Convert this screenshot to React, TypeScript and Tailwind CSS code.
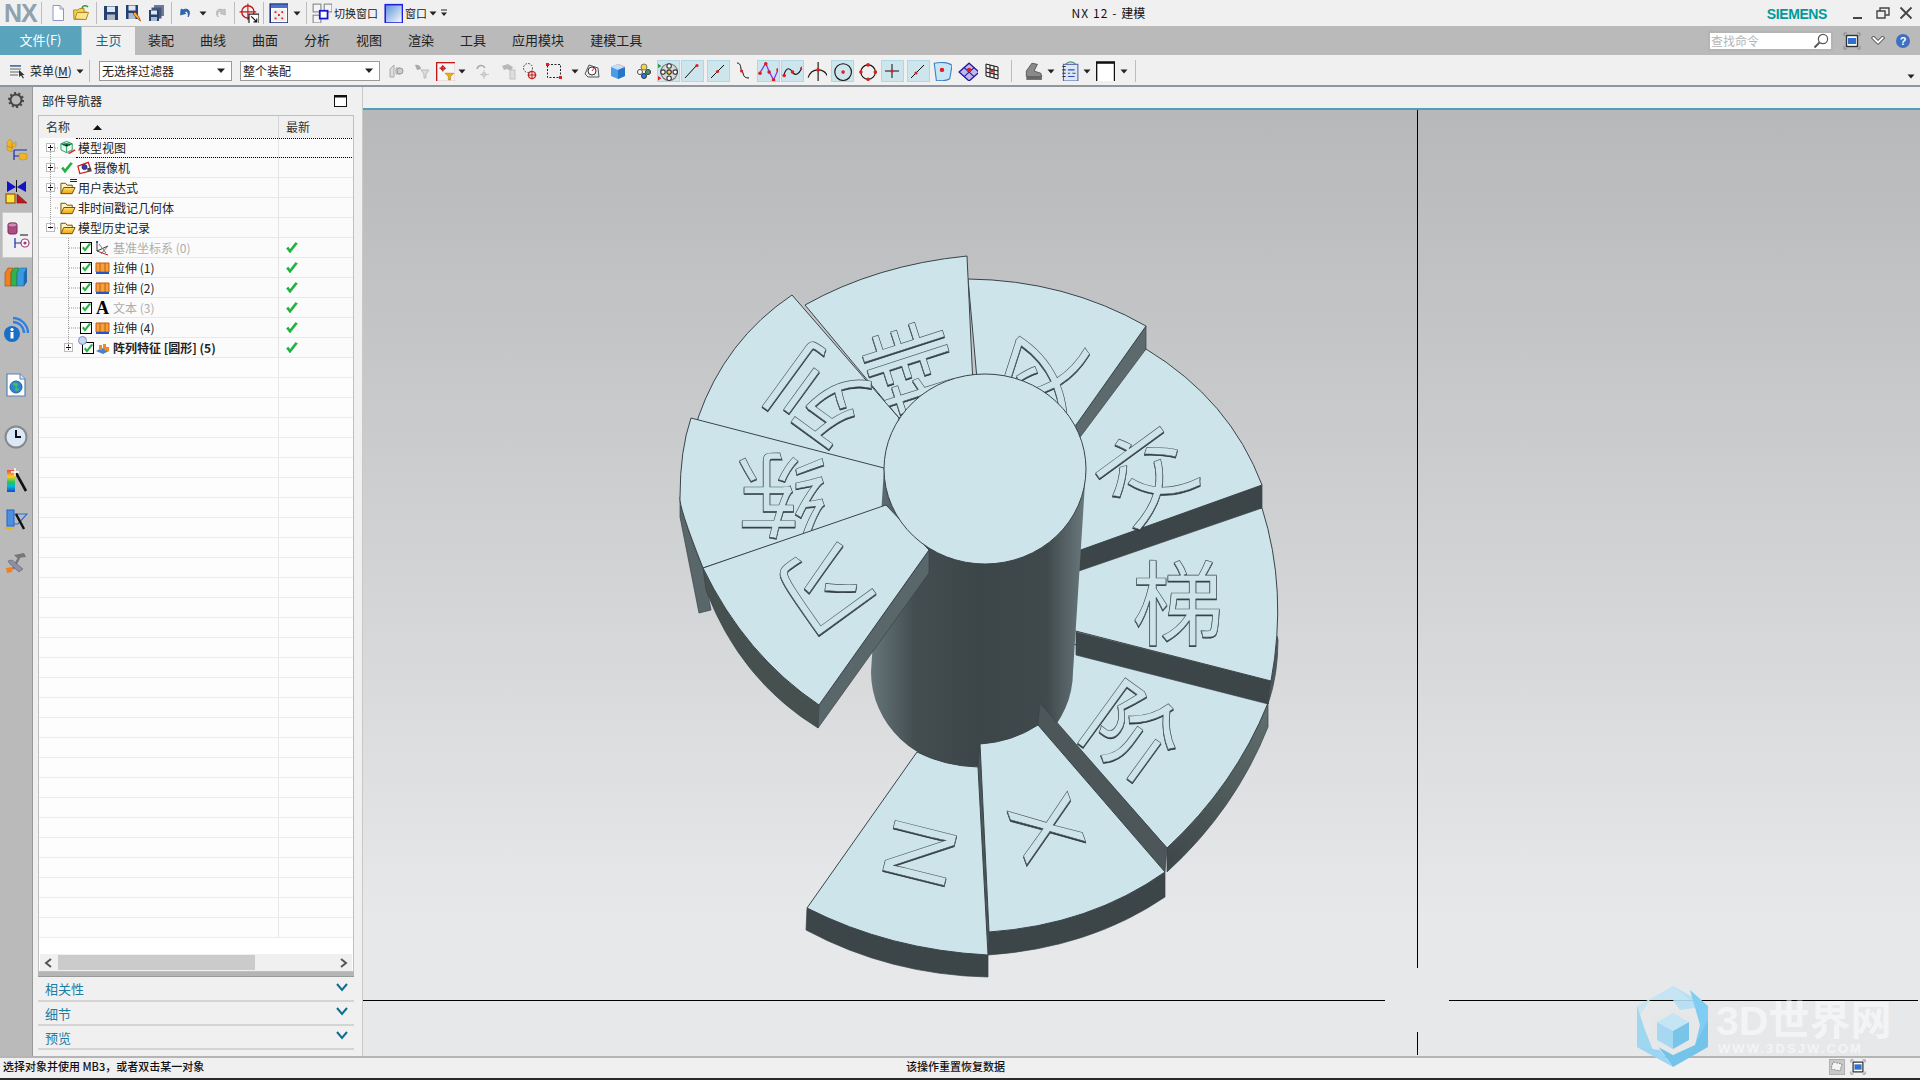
import React from "react";

const cjk = "font-['Noto_Sans_CJK_SC','Liberation_Sans',sans-serif]";
const R = "#e11d1d";

function S({ children, w = 18, h = 18 }: { children: React.ReactNode; w?: number; h?: number }) {
  return (
    <svg width={w} height={h} viewBox="0 0 18 18" className="shrink-0" fill="none">
      {children}
    </svg>
  );
}
const Dot = ({ x, y, r = 1.6 }: { x: number; y: number; r?: number }) => <circle cx={x} cy={y} r={r} fill={R} />;
const Dd = () => (
  <svg width="8" height="5" viewBox="0 0 8 5" className="shrink-0">
    <path d="M0.5 0.5H7.5L4 4.5Z" fill="#222" />
  </svg>
);

const icons: Record<string, React.ReactNode> = {
  doc: <S><path d="M4 1.5H11L14.5 5V16.5H4Z" fill="#fff" stroke="#8a96c8" /><path d="M11 1.5V5H14.5" stroke="#8a96c8" /></S>,
  folder: <S><path d="M1.5 6H6L7.5 4.5H12V8H15L14 15.5H2Z" fill="#f5cf55" stroke="#b58a1e" /><path d="M3 15L5 8.5H16.5L14 15.5Z" fill="#fbe58c" stroke="#b58a1e" /><path d="M10 4C11 1.5 14 1 16 3" stroke="#2f9e44" strokeWidth="1.6" /></S>,
  save: <S><rect x="2" y="2" width="14" height="14" fill="#23406f" /><rect x="5" y="2.5" width="8" height="5.5" fill="#dfe7f3" /><rect x="5" y="10.5" width="8" height="5.5" fill="#aeb8c8" /></S>,
  saveas: <S><rect x="2" y="1" width="12" height="14" fill="#23406f" /><rect x="4.5" y="1.5" width="7" height="5" fill="#dfe7f3" /><rect x="4.5" y="9" width="7" height="6" fill="#aeb8c8" /><path d="M9 10L14 15L16.5 17L15 13L11 8Z" fill="#f2b632" stroke="#c03020" strokeWidth=".8" /></S>,
  saveall: <S><rect x="7" y="1" width="10" height="11" fill="#6d7d99" /><rect x="4.5" y="3.5" width="10" height="11" fill="#44587c" /><rect x="2" y="6" width="10" height="11" fill="#23406f" /><rect x="4" y="6.5" width="6" height="4" fill="#dfe7f3" /><rect x="4" y="13" width="6" height="4" fill="#aeb8c8" /></S>,
  undo: <S><path d="M4 5L3.5 11L9 9.5L7 8C9.5 6.5 12 8 11 13C14.5 9 12 3 6 5.8Z" fill="#2c67b5" stroke="#1d4f91" strokeWidth=".6" /></S>,
  redo: <S><path d="M14 5L14.5 11L9 9.5L11 8C8.5 6.5 6 8 7 13C3.5 9 6 3 12 5.8Z" fill="#c5c5c5" stroke="#aaa" strokeWidth=".6" /></S>,
  target: <S w={20} h={20}><circle cx="8" cy="8" r="5.5" stroke="#c01818" strokeWidth="1.2" /><path d="M8 0.5V15.5M0.5 8H15.5" stroke="#c01818" /><rect x="9" y="10" width="9" height="9" fill="#fff" stroke="#111" /><path d="M11 12L16 17M16 14V17H13" stroke="#111" /></S>,
  wingrid: <S w={20} h={20}><rect x="2" y="1" width="16" height="17" fill="#fff" stroke="#1b2a80" strokeWidth="1.4" /><rect x="2.5" y="1.5" width="15" height="3" fill="#4b74c8" /><rect x="4" y="6" width="12" height="10" fill="#ececec" /><path d="M6 7.5h1.6v1.6H6zM12 7.5h1.6v1.6H12zM9 10h1.6v1.6H9zM6 13h1.6v1.6H6zM12 13h1.6v1.6H12z" fill={R} /></S>,
  switchwin: <S w={20} h={20}><rect x="1" y="1" width="7" height="7" stroke="#888" fill="#f4f4f4" /><rect x="11" y="1" width="7" height="7" stroke="#888" fill="#f4f4f4" /><rect x="1" y="11" width="7" height="7" stroke="#888" fill="#f4f4f4" /><rect x="7" y="7" width="7" height="7" stroke="#1515d0" strokeWidth="1.6" fill="#fff" /></S>,
  window: <S w={20} h={20}><defs><linearGradient id="wg" x1="0" y1="0" x2="1" y2="1"><stop offset="0" stopColor="#5a8ed8" /><stop offset="1" stopColor="#fff" /></linearGradient></defs><rect x="2" y="1.5" width="15.5" height="16.5" fill="url(#wg)" stroke="#1e1ee0" strokeWidth="1.4" /></S>,
  menu: <S><rect x="1" y="3" width="11" height="1.8" fill="#4a7ba8" /><path d="M1 7H12M1 10H12M1 13H9" stroke="#666" /><path d="M10 8V15L12 13.5L14 16.5L15 16L13.2 13H15.5Z" fill="#333" /></S>,
  gray1: <S><path d="M3 7L7 3V15H3ZM9 6H13V12H9Z" fill="#ddd" stroke="#aaa" /><circle cx="13" cy="9" r="3" fill="#ccc" stroke="#999" /></S>,
  gray2: <S><path d="M2 3C5 2 8 4 8 7L4 8Z" fill="#aaa" /><path d="M8 8H16L13 12V16H11V12Z" fill="#ddd" stroke="#bbb" /></S>,
  redfilter: <S w={20} h={20}><rect x="1.5" y="1.5" width="17" height="17" fill="#f5f5f5" stroke="#c01818" strokeWidth="1.2" /><path d="M7 3.5V9.5M4 6.5H10" stroke="#c01818" /><circle cx="7" cy="6.5" r="1.6" stroke="#c01818" /><path d="M9 11H17L14 14V17H12V14Z" fill="#eab308" stroke="#a17808" strokeWidth=".5" /></S>,
  gray3: <S><path d="M4 7C5 3 10 2 12 6" stroke="#aaa" strokeWidth="1.5" /><path d="M11 8V17M7 12.5H16" stroke="#c8c8c8" /><circle cx="11" cy="12.5" r="2" stroke="#c0c0c0" /></S>,
  gray4: <S><path d="M2 4L8 2L13 5L11 9L7 7L4 8Z" fill="#b8b8b8" /><rect x="10" y="8" width="5" height="9" fill="#ddd" stroke="#c0c0c0" /></S>,
  dashc: <S><circle cx="7" cy="6" r="4.5" stroke="#333" strokeDasharray="1.5 1.5" /><circle cx="11" cy="13" r="3.5" stroke="#c01818" strokeWidth="1.2" /><path d="M11 8.5V17.5M6.5 13H15.5" stroke="#c01818" /></S>,
  dashr: <S><rect x="2.5" y="2.5" width="13" height="13" stroke="#222" strokeDasharray="2 1.5" /><rect x="1" y="1" width="3" height="3" fill={R} /><rect x="14" y="14" width="3" height="3" fill={R} /></S>,
  gauge: <S><path d="M2 12L6 3L15 6L16 15H5Z" fill="#e8eef5" stroke="#555" /><circle cx="9" cy="9" r="4" fill="#fff" stroke="#333" /><path d="M9 9L12 5" stroke={R} /></S>,
  cube: <S><path d="M9 2L16 5V14L9 17L2 14V5Z" fill="#4b9be6" /><path d="M2 5L9 8L16 5L9 2Z" fill="#bfe0f8" /><path d="M9 8V17L16 14V5Z" fill="#2a74c8" /><path d="M9 2L16 5" stroke="#f5b5b5" /></S>,
  snappts: <S><circle cx="9" cy="5" r="3" fill="#f6d33c" stroke="#777" /><circle cx="5" cy="10" r="2.5" fill="#fff" stroke="#444" /><circle cx="13" cy="10" r="2.5" fill="#38a169" stroke="#333" /><circle cx="9" cy="14" r="2.5" fill="#2c7be5" stroke="#333" /></S>,
  pointsel: <S w={20} h={20}><circle cx="10" cy="10" r="7.5" fill="#d8d8d8" stroke="#777" /><circle cx="10" cy="10" r="2" fill="#f6d33c" stroke="#333" /><circle cx="10" cy="4.5" r="2" fill="#fff" stroke="#333" /><circle cx="10" cy="15.5" r="2" fill="#fff" stroke="#333" /><circle cx="4.5" cy="10" r="2" fill="#fff" stroke="#333" /><circle cx="15.5" cy="10" r="2" fill="#fff" stroke="#333" /><path d="M0 2.5L3 4.5L0 6.5Z" fill="#1ca34a" /><path d="M0 13.5L3 15.5L0 17.5Z" fill={R} /></S>,
  lend: <S><path d="M2 16L14 3" stroke="#111" /><Dot x={14} y={3.5} /></S>,
  lmid: <S><path d="M2 16L15 3" stroke="#111" /><Dot x={8.5} y={9.5} /></S>,
  scurve: <S><path d="M4 1C9 1 7 8 9 9C11 11 9 16 16 16" stroke="#111" /><Dot x={8.6} y={9} /></S>,
  pole: <S w={20} h={20}><path d="M1.5 11L7 2L10 10L14 17L18 8" stroke="#7c3aed" /><path d="M1.5 11L7 2L14 17L18 8" stroke="#7c3aed" opacity=".5" /><Dot x={1.8} y={11} /><Dot x={7} y={2.5} /><Dot x={10} y={10} /><Dot x={14} y={17} /><Dot x={18} y={8} /></S>,
  wave: <S w={20} h={20}><path d="M1.5 13C4 5 7 6 9.5 10C12 14 15 12 18 6" stroke="#111" /><Dot x={2} y={13} /><Dot x={9.5} y={10} /><Dot x={18} y={6.5} /></S>,
  tan: <S w={20} h={20}><path d="M1 15C3 9 7 8 10 8C13 8 17 9 19 15M10 1V18" stroke="#111" /><Dot x={10} y={8} /></S>,
  ccenter: <S w={20} h={20}><circle cx="10" cy="10" r="7.5" stroke="#111" /><Dot x={10} y={10} /></S>,
  cquad: <S w={20} h={20}><circle cx="10" cy="10" r="6.5" stroke="#111" /><Dot x={10} y={3.5} /><Dot x={10} y={16.5} /><Dot x={3.5} y={10} /><Dot x={16.5} y={10} /></S>,
  cross: <S><path d="M9 2V16M2 9H16" stroke="#111" /><Dot x={9} y={9} /></S>,
  lon: <S><path d="M2 16L15 3" stroke="#111" /><Dot x={7} y={11} /></S>,
  face: <S w={20} h={20}><path d="M2 2C7 1 15 1 18 4L16 16C12 19 7 17 4 18Z" fill="#c6e5f5" stroke="#3b82c4" /><Dot x={9} y={8} r={2} /></S>,
  diamond: <S w={20} h={20}><path d="M10 2L19 10L10 18L1 10Z" fill="#bcb9ee" stroke="#2418a0" strokeWidth="1.2" /><path d="M5.5 6L14.5 14M14.5 6L5.5 14" stroke="#2418a0" /><Dot x={10} y={8} r={2} /></S>,
  mesh: <S><path d="M3 2L15 5V17L3 14ZM7 3V15M11 4V16M3 6L15 9M3 10L15 13" stroke="#111" /><Dot x={9} y={9} /></S>,
  printer: <S w={20} h={20}><path d="M3 14V9L8 2L13 3L10 9L16 11L17 14Z" fill="#8a8a8a" stroke="#444" strokeWidth=".7" /><path d="M3 14H17V17H3Z" fill="#666" /></S>,
  notebook: <S w={20} h={20}><rect x="4" y="3" width="13" height="15" fill="#dfe6f7" stroke="#5566aa" /><path d="M3 5H6M3 8H6M3 11H6M3 14H6" stroke="#333" /><path d="M8 8H14M8 11H10M12 11H15M8 14H14" stroke="#2b50b5" /><path d="M6 3C8 0 13 0 15 3" stroke="#4a9a6a" /></S>,
  whitebox: <S w={20} h={20}><rect x="1.5" y="1" width="16" height="18" fill="#fff" stroke="#111" strokeWidth="1.2" /><rect x="1" y="0.5" width="17" height="2" fill="#111" /></S>,
};

const Q = ({ n, cn }: { n: string; cn: string }) => <div className={`flex items-center justify-center shrink-0 ${cn}`}>{icons[n]}</div>;

const tools: { n?: string; w: string; hl?: boolean; dd?: boolean; ml?: string }[] = [
  { n: "gray1", w: "w-[27px]" },
  { n: "gray2", w: "w-[24px]" },
  { n: "redfilter", w: "w-[22px]" },
  { dd: true, w: "w-[12px]" },
  { n: "gray3", w: "w-[28px]" },
  { n: "gray4", w: "w-[26px]" },
  { n: "dashc", w: "w-[16px]" },
  { n: "dashr", w: "w-[32px]" },
  { dd: true, w: "w-[10px]" },
  { n: "gauge", w: "w-[25px]" },
  { n: "cube", w: "w-[26px]" },
  { n: "snappts", w: "w-[26px]" },
  { n: "pointsel", w: "w-[23px]", hl: true },
  { n: "lend", w: "w-[23px]", hl: true, ml: "ml-px" },
  { n: "lmid", w: "w-[23px]", hl: true, ml: "ml-[3px]" },
  { n: "scurve", w: "w-[25px]" },
  { n: "pole", w: "w-[23px]", hl: true, ml: "ml-[2px]" },
  { n: "wave", w: "w-[23px]", hl: true, ml: "ml-px" },
  { n: "tan", w: "w-[27px]" },
  { n: "ccenter", w: "w-[23px]", hl: true },
  { n: "cquad", w: "w-[27px]" },
  { n: "cross", w: "w-[23px]", hl: true },
  { n: "lon", w: "w-[23px]", hl: true, ml: "ml-[3px]" },
  { n: "face", w: "w-[25px]" },
  { n: "diamond", w: "w-[26px]" },
  { n: "mesh", w: "w-[23px]" },
];

const Sep = ({ cn = "" }: { cn?: string }) => <div className={`w-px h-[22px] bg-[#bdbdbd] shrink-0 ${cn}`} />;

function TitleBar() {
  return (
    <div className={`h-[26px] bg-[#f0f0f0] flex items-center relative shrink-0 ${cjk} text-[12px] text-[#222]`}>
      <span className="ml-[4px] w-[33px] font-['Liberation_Sans',sans-serif] font-bold text-[25px] leading-none text-[#8ea1ad] tracking-[-1px]">NX</span>
      <Sep cn="ml-[4px]" />
      <Q n="doc" cn="w-[20px] ml-[6px]" />
      <Q n="folder" cn="w-[20px] ml-[3px]" />
      <Sep cn="ml-[5px]" />
      <Q n="save" cn="w-[20px] ml-[4px]" />
      <Q n="saveas" cn="w-[20px] ml-[2px]" />
      <Q n="saveall" cn="w-[20px] ml-[3px]" />
      <Sep cn="ml-[5px]" />
      <Q n="undo" cn="w-[20px] ml-[4px]" />
      <div className="ml-[3px]"><Dd /></div>
      <Q n="redo" cn="w-[20px] ml-[3px]" />
      <Sep cn="ml-[4px]" />
      <Q n="target" cn="w-[22px] ml-[3px]" />
      <Sep cn="ml-[3px]" />
      <Q n="wingrid" cn="w-[22px] ml-[3px]" />
      <div className="ml-[4px]"><Dd /></div>
      <Sep cn="ml-[5px]" />
      <Q n="switchwin" cn="w-[20px] ml-[5px]" />
      <span className="ml-[2px] leading-none text-[11px]">切换窗口</span>
      <Q n="window" cn="w-[22px] ml-[4px]" />
      <span className="ml-[1px] leading-none text-[11px]">窗口</span>
      <div className="ml-[2px]"><Dd /></div>
      <svg width="8" height="8" viewBox="0 0 8 8" className="ml-[3px]"><path d="M1 1H7" stroke="#222" /><path d="M1 3.5H7L4 7Z" fill="#222" /></svg>
      <div className="flex-1 flex justify-center">
        <span className="ml-[2px] text-[12px] leading-none text-[#111]"><span className="tracking-[1.1px]">NX 12 - </span>建模</span>
      </div>
      <span className="font-['Liberation_Sans',sans-serif] font-bold text-[14px] tracking-[-0.4px] text-[#009a9a] leading-none mt-[2px]">SIEMENS</span>
      <svg width="14" height="14" viewBox="0 0 14 14" className="ml-[25px]"><path d="M1 12H10" stroke="#444" strokeWidth="2" /></svg>
      <svg width="14" height="14" viewBox="0 0 14 14" className="ml-[10px]"><path d="M1 5H9V12H1ZM4 5V2H13V9H9" stroke="#444" strokeWidth="1.4" fill="none" /></svg>
      <svg width="14" height="14" viewBox="0 0 14 14" className="ml-[9px] mr-[7px]"><path d="M1.5 1.5L12.5 12.5M12.5 1.5L1.5 12.5" stroke="#444" strokeWidth="1.8" /></svg>
    </div>
  );
}

function Tabs() {
  const t = ["装配", "曲线", "曲面", "分析", "视图", "渲染", "工具", "应用模块", "建模工具"];
  return (
    <div className={`h-[29px] bg-[#bababa] flex items-stretch shrink-0 ${cjk} text-[13px] text-[#222]`}>
      <div className="w-[81px] bg-[#5aa3bd] text-white flex items-center justify-center pb-[2px]">文件(F)</div>
      <div className="w-[53px] ml-px mt-px bg-[#f0f0f0] text-[#0a6f93] flex items-center justify-center pb-[2px]">主页</div>
      {t.map((x) => (
        <div key={x} className="px-[13px] flex items-center leading-none pb-[2px]">{x}</div>
      ))}
      <div className="flex-1" />
      <div className="flex items-center">
        <div className="w-[125px] h-[20px] bg-white border-2 border-[#b4b4b4] flex items-center justify-between pl-[1px] pr-[2px] text-[12px] text-[#b5b5b5]">
          <span className="leading-none">查找命令</span>
          <svg width="16" height="16" viewBox="0 0 16 16"><circle cx="10" cy="6" r="4.6" fill="#fff" stroke="#555" strokeWidth="1.2" /><path d="M6.5 9.5L1.5 14.5" stroke="#555" strokeWidth="2" /></svg>
        </div>
        <svg width="18" height="18" viewBox="0 0 18 18" className="ml-[10px]"><path d="M1 4V1H4M14 1H17V4M17 14V17H14M4 17H1V14" stroke="#888" fill="none" /><rect x="3.5" y="3.5" width="11" height="11" fill="#fff" stroke="#333" strokeWidth="1.4" /><rect x="5" y="6" width="8" height="6" fill="#2f6fd0" /></svg>
        <svg width="16" height="14" viewBox="0 0 16 14" className="ml-[9px]"><path d="M1.5 4L8 10.5L14.5 4L12.5 2L8 6.5L3.5 2Z" fill="#fff" stroke="#333" /></svg>
        <svg width="16" height="16" viewBox="0 0 16 16" className="ml-[9px] mr-[9px]"><circle cx="8" cy="8" r="7" fill="#3f6fc4" /><text x="8" y="12" fontSize="11" fontWeight="700" fill="#fff" textAnchor="middle" fontFamily="Liberation Sans">?</text></svg>
      </div>
    </div>
  );
}

function Combo({ text, w, ml }: { text: string; w: string; ml: string }) {
  return (
    <div className={`${w} ${ml} h-[20px] bg-white border border-[#9a9a9a] flex items-center justify-between pl-[2px] pr-[5px] shrink-0 text-[12px] text-[#222]`}>
      <span className="leading-none">{text}</span>
      <svg width="9" height="6" viewBox="0 0 9 6"><path d="M0 0.5H8L4 5Z" fill="#222" /></svg>
    </div>
  );
}

function Toolbar() {
  return (
    <div className={`h-[32px] pt-[2px] bg-[#f0f0f0] border-b-2 border-[#8f979c] flex items-center shrink-0 ${cjk} text-[12px] text-[#222]`}>
      <Q n="menu" cn="w-[18px] ml-[9px]" />
      <span className="ml-[3px] leading-none">菜单(<u>M</u>)</span>
      <div className="ml-[4px]"><Dd /></div>
      <Sep cn="ml-[5px]" />
      <Combo text="无选择过滤器" w="w-[133px]" ml="ml-[9px]" />
      <Combo text="整个装配" w="w-[140px]" ml="ml-[8px]" />
      <div className="w-[3px]" />
      {tools.map((t, i) =>
        t.dd ? (
          <div key={i} className={`${t.w} shrink-0 flex items-center justify-center`}><Dd /></div>
        ) : (
          <div key={i} className={`${t.w} ${t.ml ?? ""} h-[22px] shrink-0 flex items-center justify-center ${t.hl ? "bg-[#cde5ec] border border-[#aed8e5]" : ""}`}>
            {icons[t.n!]}
          </div>
        )
      )}
      <Sep cn="ml-[7px]" />
      <Q n="printer" cn="w-[26px] ml-[8px]" />
      <div className="w-[10px] flex justify-center"><Dd /></div>
      <Q n="notebook" cn="w-[26px]" />
      <div className="w-[10px] flex justify-center"><Dd /></div>
      <Q n="whitebox" cn="w-[26px]" />
      <div className="w-[12px] flex justify-center"><Dd /></div>
      <Sep cn="ml-[5px]" />
      <div className="flex-1" />
      <div className="mr-[5px] mt-[10px]"><Dd /></div>
    </div>
  );
}

function LeftBar() {
  const Cell = ({ children, active, cn = "" }: { children: React.ReactNode; active?: boolean; cn?: string }) => (
    <div className={`flex items-center justify-center ${active ? "bg-[#f0f0f0] border-y border-l border-[#ccc] w-[30px] ml-[2px]" : "w-full"} ${cn}`}>{children}</div>
  );
  return (
    <div className="w-[33px] shrink-0 bg-[#bababa] border-r border-[#999] flex flex-col items-center">
      <Cell cn="h-[26px]">
        <svg width="18" height="18" viewBox="0 0 18 18"><circle cx="9" cy="9" r="5.5" fill="none" stroke="#444" strokeWidth="2" /><circle cx="9" cy="9" r="7" fill="none" stroke="#444" strokeWidth="2" strokeDasharray="2 2.4" /></svg>
      </Cell>
      <Cell cn="h-[44px] mt-[14px]">
        <svg width="24" height="26" viewBox="0 0 24 26"><path d="M3 6V10L8 12V5L6 3ZM8 8L12 6V10L8 12ZM3 10L8 12V16L3 14Z" fill="#f0b429" stroke="#b8860b" strokeWidth=".5" /><path d="M10 14V24M10 20H15M10 14H23" stroke="#1a2bb0" strokeWidth="1.2" /><path d="M15 18L19 17L23 18V23L19 24L15 23Z" fill="#f0b429" stroke="#b8860b" strokeWidth=".5" /></svg>
      </Cell>
      <Cell cn="h-[36px] mt-[3px]">
        <svg width="24" height="26" viewBox="0 0 24 26"><path d="M3 2L12 8L3 13ZM22 2L13 8L22 13Z" fill="#1313c8" /><path d="M12.5 1V13" stroke="#111" /><rect x="2" y="15" width="9" height="9" fill="#f5e642" stroke="#a0520a" strokeWidth="1.2" /><path d="M13 15L23 24H13Z" fill="#c01818" stroke="#7a1010" strokeWidth=".6" /></svg>
      </Cell>
      <Cell active cn="h-[46px] mt-[2px]">
        <svg width="24" height="28" viewBox="0 0 24 28"><rect x="2" y="2" width="9" height="11" rx="2" fill="#b04a82" stroke="#7a2c5a" /><ellipse cx="6.5" cy="4" rx="4.5" ry="2" fill="#d58ab5" stroke="#7a2c5a" strokeWidth=".6" /><path d="M14 14H22" stroke="#111" /><path d="M9 17V27M9 22H15" stroke="#1a2bb0" strokeWidth="1.2" /><circle cx="19" cy="22" r="4" fill="#fff" stroke="#a03a70" strokeWidth="1.2" /><circle cx="19" cy="22" r="1.6" fill="#a03a70" /></svg>
      </Cell>
      <Cell cn="h-[38px]">
        <svg width="24" height="24" viewBox="0 0 24 24"><path d="M1 8L4 3H9L7 8V21H1Z" fill="#f08020" stroke="#a04a10" strokeWidth=".6" /><path d="M7 8L10 3H15L13 8V21H7Z" fill="#32b24a" stroke="#1c7a30" strokeWidth=".6" /><path d="M13 8L16 3H23L20 8V21H13Z" fill="#3a9ae0" stroke="#1c6ab0" strokeWidth=".6" /><path d="M20 8L23 3V17L20 21Z" fill="#1c6ab0" /></svg>
      </Cell>
      <Cell cn="h-[36px] mt-[16px]">
        <svg width="26" height="26" viewBox="0 0 26 26"><circle cx="9" cy="17" r="8" fill="#1a6fc4" /><circle cx="9" cy="12.5" r="1.6" fill="#fff" /><rect x="7.5" y="15" width="3" height="6.5" fill="#fff" /><path d="M10 5C16 5 21 10 21 16M10 1C18 1 25 8 25 16" stroke="#2f7fe0" strokeWidth="2.4" fill="none" /></svg>
      </Cell>
      <Cell cn="h-[36px] mt-[19px]">
        <svg width="22" height="24" viewBox="0 0 22 24"><path d="M2 1H15L20 6V23H2Z" fill="#fff" stroke="#5a7fb8" strokeWidth="1.2" /><path d="M15 1V6H20" fill="#dbe8f8" stroke="#5a7fb8" /><circle cx="11" cy="14" r="6" fill="#2c86c8" stroke="#1a5fa8" /><path d="M7 11C9 9 13 9 13 12C13 14 9 14 10 17C11 19 14 18 14 16" fill="#4db56a" /></svg>
      </Cell>
      <Cell cn="h-[36px] mt-[16px]">
        <svg width="24" height="24" viewBox="0 0 24 24"><circle cx="12" cy="12" r="10.5" fill="#dbe8f8" stroke="#888" strokeWidth="2" /><path d="M12 5V12H17" stroke="#111" strokeWidth="2" fill="none" /></svg>
      </Cell>
      <Cell cn="h-[36px] mt-[7px]">
        <svg width="24" height="26" viewBox="0 0 24 26"><defs><linearGradient id="rb" x1="0" y1="0" x2="0" y2="1"><stop offset="0" stopColor="#ef4444" /><stop offset=".3" stopColor="#f5d020" /><stop offset=".55" stopColor="#22c55e" /><stop offset=".75" stopColor="#06b6d4" /><stop offset="1" stopColor="#1d3fd8" /></linearGradient></defs><rect x="3" y="3" width="8" height="22" fill="url(#rb)" /><path d="M12 6L22 24" stroke="#111" strokeWidth="2.6" /><path d="M11 1V9M7 5H15" stroke="#fff" strokeWidth="1.4" /></svg>
      </Cell>
      <Cell cn="h-[36px] mt-[4px]">
        <svg width="24" height="24" viewBox="0 0 24 24"><rect x="3" y="2" width="7" height="16" fill="#4a90e2" stroke="#2563c4" /><path d="M10 6H23L14 16H10" fill="none" stroke="#2f6fd0" strokeWidth="1.2" /><path d="M12 6L20 21" stroke="#111" strokeWidth="2.4" /><path d="M1 20H10" stroke="#e6b800" strokeWidth="1.6" /></svg>
      </Cell>
      <Cell cn="h-[36px] mt-[7px]">
        <svg width="24" height="24" viewBox="0 0 24 24"><path d="M10 4L20 2L22 6L13 7Z" fill="#777" /><path d="M16 5L9 18" stroke="#777" strokeWidth="2.4" /><path d="M4 10L8 9L19 18L15 21L6 13Z" fill="#8f8fa8" stroke="#555" strokeWidth=".5" /><path d="M2 17L9 16L8 21L3 22Z" fill="#f08020" /></svg>
      </Cell>
    </div>
  );
}

const Check = ({ s = 14 }: { s?: number }) => (
  <svg width={s} height={s} viewBox="0 0 14 14" className="shrink-0"><path d="M1.5 7.5L5 12L12.5 2.5L10.5 1.5L5 8.5L3.2 6Z" fill="#18b83a" stroke="#0f8f2b" strokeWidth=".4" /></svg>
);
const ChkBox = () => (
  <div className="w-[12px] h-[12px] border border-black bg-white flex items-center justify-center shrink-0"><Check s={11} /></div>
);
const Plus = ({ minus }: { minus?: boolean }) => (
  <svg width="9" height="9" viewBox="0 0 9 9" className="shrink-0"><rect x=".5" y=".5" width="8" height="8" fill="#fff" stroke="#bbb" /><path d={minus ? "M2 4.5H7" : "M2 4.5H7M4.5 2V7"} stroke="#111" /></svg>
);
const Folder = () => (
  <svg width="16" height="16" viewBox="0 0 17 16" className="shrink-0"><defs><linearGradient id="fo" x1="0" y1="0" x2="0" y2="1"><stop offset="0" stopColor="#ffe27a" /><stop offset="1" stopColor="#eda100" /></linearGradient></defs><path d="M1 14V3H6L7.5 5H13V8" stroke="#6e4a00" fill="#fff4c4" /><path d="M1 14L4 7.5H16L13 14Z" fill="url(#fo)" stroke="#6e4a00" /></svg>
);
const Extrude = () => (
  <svg width="15" height="15" viewBox="0 0 15 15" className="shrink-0"><path d="M1 3H14V12H1Z" fill="#f4a13a" stroke="#c85a10" /><path d="M5 3V12M10 3V12" stroke="#c85a10" /><path d="M1 13H14" stroke="#2456c8" strokeWidth="2" /></svg>
);

type Row = { t: string; i: React.ReactNode; ind: string; exp?: "+" | "-"; gray?: boolean; bold?: boolean; ok?: boolean; cb?: boolean; dotted?: boolean };
const rows: Row[] = [
  { t: "模型视图", ind: "pl-[7px]", exp: "+", dotted: true, i: <svg width="16" height="16" viewBox="0 0 17 16" className="shrink-0"><path d="M7 1L13 3.5V10L7 13L1 10V3.5Z" fill="#e8f6ee" stroke="#1f9a60" /><path d="M1 3.5L7 6.5L13 3.5M7 6.5V13M4 2.3L10 5M10 2.3L4 5" stroke="#1f9a60" /><path d="M9 14L16 10" stroke="#e11d1d" strokeWidth="1.6" /></svg> },
  { t: "摄像机", ind: "pl-[7px]", exp: "+", i: <><Check /><svg width="15" height="14" viewBox="0 0 16 14" className="shrink-0"><path d="M1 5L12 1L15 10L3 13Z" fill="#fff" stroke="#d01818" strokeWidth="1.3" /><circle cx="8" cy="6" r="2.8" fill="#3a3ab8" stroke="#111" strokeWidth=".5" /><path d="M11 7H15V10H11Z" fill="#444" /></svg></> },
  { t: "用户表达式", ind: "pl-[7px]", exp: "+", i: <div className="relative"><Folder /><div className="absolute right-[-1px] top-[-1px] w-[7px] h-[3px] border-y border-[#222]" /></div> },
  { t: "非时间戳记几何体", ind: "pl-[7px]", i: <Folder /> },
  { t: "模型历史记录", ind: "pl-[7px]", exp: "-", i: <Folder /> },
  { t: "基准坐标系 (0)", ind: "pl-[27px]", gray: true, ok: true, cb: true, i: <svg width="15" height="16" viewBox="0 0 15 16" className="shrink-0"><path d="M2 1V11L13 6" stroke="#333" fill="none" /><path d="M2 11L13 15" stroke="#c01818" /><path d="M4 4L11 13M13 6L6 14" stroke="#777" /><circle cx="2" cy="2" r="1" fill="#1a3cc8" /></svg> },
  { t: "拉伸 (1)", ind: "pl-[27px]", ok: true, cb: true, i: <Extrude /> },
  { t: "拉伸 (2)", ind: "pl-[27px]", ok: true, cb: true, i: <Extrude /> },
  { t: "文本 (3)", ind: "pl-[27px]", gray: true, ok: true, cb: true, i: <span className="font-['Liberation_Serif',serif] font-bold text-[18px] leading-none text-black w-[15px] text-center shrink-0">A</span> },
  { t: "拉伸 (4)", ind: "pl-[27px]", ok: true, cb: true, i: <Extrude /> },
];

function TreeRow({ r }: { r: Row }) {
  return (
    <div className="h-[20px] flex border-b border-[#e8e8e8] bg-[#fbfbfb] shrink-0">
      <div className="w-[240px] border-r border-[#e4e4e4] flex items-center relative">
        <div className={`flex items-center ${r.ind}`}>
          {r.exp ? <Plus minus={r.exp === "-"} /> : <div className="w-[9px] shrink-0" />}
          <div className="flex items-center ml-[5px] gap-[3px]">
            {r.cb && <ChkBox />}
            {r.i}
          </div>
          <span className={`${r.cb || r.bold ? "ml-[3px]" : "ml-[2px]"} text-[12px] leading-none whitespace-nowrap ${r.gray ? "text-[#adadad]" : "text-[#222]"} ${r.bold ? "font-bold" : ""}`}>{r.t}</span>
        </div>
      </div>
      <div className="flex-1 flex items-center pl-[6px]">{r.ok && <Check />}</div>
      {r.dotted && <div className="absolute left-[37px] right-0 h-[20px] w-[278px] border-y border-dotted border-black pointer-events-none" />}
    </div>
  );
}

function Nav() {
  const blanks = Array.from({ length: 29 });
  const sec = ["相关性", "细节", "预览"];
  return (
    <div className={`w-[329px] shrink-0 bg-[#f0f0f0] flex flex-col ${cjk}`}>
      <div className="h-[28px] flex items-center justify-between pl-[9px] pr-[15px] shrink-0">
        <span className="text-[12px] leading-none text-[#222]">部件导航器</span>
        <svg width="13" height="12" viewBox="0 0 13 12"><rect x=".5" y=".5" width="12" height="11" fill="#fff" stroke="#111" /><rect x="0" y="0" width="13" height="2.5" fill="#111" /></svg>
      </div>
      <div className="ml-[5px] w-[316px] h-[857px] border border-[#bfbfbf] bg-white flex flex-col shrink-0 relative">
        <div className="h-[22px] bg-[#f0f0f0] flex shrink-0 text-[12px] text-[#333]">
          <div className="w-[240px] border-r border-[#d5d5d5] flex items-center pl-[7px]">
            <span className="leading-none">名称</span>
            <svg width="9" height="5" viewBox="0 0 9 5" className="ml-[23px]"><path d="M0 5H9L4.5 0Z" fill="#111" /></svg>
          </div>
          <span className="pl-[7px] self-center leading-none">最新</span>
        </div>
        <div className="flex-1 flex flex-col overflow-hidden relative">
          {rows.map((r) => <TreeRow key={r.t} r={r} />)}
          <TreeRow r={{ t: "阵列特征 [圆形] (5)", ind: "pl-[25px]", exp: "+", bold: true, ok: true, i: <>
            <div className="relative w-[12px] h-[12px] border border-black shrink-0 ml-[4px]"><Check s={11} /><div className="absolute left-[-5px] top-[-7px] w-[9px] h-[9px] rounded-full bg-[#c7d7f0] border border-[#7a8fc0]" /></div>
            <svg width="15" height="14" viewBox="0 0 15 14" className="shrink-0 ml-[-2px]"><path d="M1 10L7 7L14 10L8 13Z" fill="#4a80d0" /><path d="M4 4H7V9H4ZM8 3H11V8H8ZM11 6H14V10H11Z" fill="#ee8a20" /></svg>
          </> }} />
          {blanks.map((_, i) => (
            <div key={i} className="h-[20px] flex border-b border-[#ececec] bg-[#fdfdfd] shrink-0">
              <div className="w-[240px] border-r border-[#e8e8e8]" />
            </div>
          ))}
          <svg className="absolute left-0 top-0 pointer-events-none" width="80" height="240" viewBox="0 0 80 240">
            <path d="M11.5 10V92M16 10H20M16 30H20M16 50H20M16 70H20M16 90H20M29.5 100V212M30 110H41M30 130H41M30 150H41M30 170H41M30 190H41" stroke="#999" strokeDasharray="1 1" fill="none" />
          </svg>
        </div>
        <div className="h-[17px] bg-[#f0f0f0] flex items-center shrink-0 mx-px">
          <svg width="18" height="12" viewBox="0 0 18 12"><path d="M11 2L6 6L11 10" stroke="#555" strokeWidth="2" fill="none" /></svg>
          <div className="w-[197px] h-[15px] bg-[#cbcbcb]" />
          <div className="flex-1" />
          <svg width="18" height="12" viewBox="0 0 18 12"><path d="M7 2L12 6L7 10" stroke="#555" strokeWidth="2" fill="none" /></svg>
        </div>
      </div>
      <div className="ml-[5px] w-[316px] h-[5px] bg-[#b5b5b5] border-b border-[#999] shrink-0" />
      {sec.map((s, i) => (
        <div key={s} className={`ml-[5px] w-[316px] ${i === 0 ? "h-[25px]" : "h-[24px]"} border-b-2 border-[#d4d4d4] flex items-center justify-between pl-[7px] pr-[6px] shrink-0`}>
          <span className="text-[13px] leading-none text-[#1d7da3]">{s}</span>
          <svg width="12" height="9" viewBox="0 0 12 9" className="mb-[3px]"><path d="M1 1L6 7L11 1" stroke="#0f6d90" strokeWidth="2" fill="none" /></svg>
        </div>
      ))}
    </div>
  );
}

const TOP = "#cde4ea";
const EDGE = "#39444a";
const DARK = "#3c4547";
const MID = "#4e595c";

function Sector({ top, sides, text, x, y, rot, size = 92, latin }: { top: string; sides: { d: string; f: string }[]; text: string; x: number; y: number; rot: number; size?: number; latin?: boolean }) {
  const ff = latin ? "Liberation Sans" : "Noto Sans CJK SC";
  return (
    <g>
      {sides.map((s, i) => <path key={i} d={s.d} fill={s.f} stroke={EDGE} strokeWidth=".7" />)}
      <path d={top} fill={TOP} stroke={EDGE} strokeWidth="1" strokeLinejoin="round" />
      <text
        x={0} y={0}
        transform={`translate(${x} ${y + 1.3}) rotate(${rot})`}
        textAnchor="middle" dominantBaseline="central"
        fontSize={size} fontFamily={ff}
        fill="#323c41" stroke="#323c41" strokeWidth=".8"
      >{text}</text>
      <text
        x={0} y={0}
        transform={`translate(${x} ${y}) rotate(${rot})`}
        textAnchor="middle" dominantBaseline="central"
        fontSize={size} fontFamily={ff}
        fill={TOP} stroke="#4a565b" strokeWidth=".6"
      >{text}</text>
    </g>
  );
}

function Model() {
  return (
    <svg className="absolute inset-0" width="1557" height="946" viewBox="363 110 1557 946">
      <defs>
        <linearGradient id="cyl" x1="871" x2="1086" y1="0" y2="0" gradientUnits="userSpaceOnUse">
          <stop offset="0" stopColor="#66757a" />
          <stop offset=".2" stopColor="#444e50" />
          <stop offset=".5" stopColor="#3c4547" />
          <stop offset=".82" stopColor="#404a4c" />
          <stop offset="1" stopColor="#6b7a7e" />
        </linearGradient>
        <linearGradient id="rimR" x1="1170" x2="1270" y1="860" y2="700" gradientUnits="userSpaceOnUse">
          <stop offset="0" stopColor="#3f484a" />
          <stop offset="1" stopColor="#62706f" />
        </linearGradient>
      </defs>
      {/* crosshair */}
      <path d="M1417.5 110V968M1417.5 1032V1055M363 1000.5H1385M1449 1000.5H1918" stroke="#000" strokeWidth="1" />

      <Sector top="M1060 640L1268 703Q1235 785 1167 848L1036 700Z" text="阶" x={1137} y={727} rot={36}
        sides={[{ d: "M1268 703L1268 727Q1235 810 1167 872L1167 848Q1235 785 1268 703Z", f: "url(#rimR)" }]} />
      <Sector top="M1262 508Q1288 590 1271 681L1060 627L1000 520Z" text="梯" x={1178} y={597} rot={0}
        sides={[
          { d: "M1076 632L1271 681L1268 704L1076 655Z", f: DARK },
          { d: "M1277 636Q1275 662 1271 681L1268 704Q1278 675 1278 640Z", f: MID },
        ]} />
      <Sector top="M1146 349Q1230 400 1262 485L1075 552L985 468Z" text="交" x={1142} y={469} rot={-36}
        sides={[{ d: "M1262 485L1262 508L1076 572L1076 550Z", f: DARK }]} />
      <Sector top="M968 279Q1065 280 1146 326L1076 425L985 468Z" text="叉" x={1034} y={376} rot={-72}
        sides={[{ d: "M1146 326L1146 349L1078 440L1076 425Z", f: "#5d6a6d" }]} />
      <Sector top="M805 305Q876 265 967 256L973 385L899 418Z" text="排" x={905} y={370} rot={-108}
        sides={[]} />
      <Sector top="M792 295L899 418L884 478L698 425L698 418Q725 340 792 295Z" text="列" x={815} y={400} rot={-144}
        sides={[]} />
      <Sector top="M691 418L884 468L890 505L703 568Q678 505 680 497Q680 450 691 418Z" text="练" x={782} y={500} rot={-180}
        sides={[{ d: "M680 497L680 517L699 613L711 610L703 568Q686 530 680 497Z", f: "#59666a" }]} />

      {/* cylinder body */}
      <path d="M1086 468L1073 672A101 95 0 0 1 871 672L884 468Z" fill="url(#cyl)" />
      {/* inner wall of the 阶 step, in front of the body */}
      <path d="M1040 703L1038 725L1165 872L1167 848Z" fill="#4d5759" stroke={EDGE} strokeWidth=".7" />

      <Sector top="M980 744Q1012 742 1038 725L1165 872Q1090 925 989 932Z" text="X" x={1047} y={827} rot={70} latin
        sides={[
          { d: "M1165 872L1165 897Q1090 948 988 955L989 932Q1090 925 1165 872Z", f: DARK },
          { d: "M978 767L980 744L989 932L988 955Z", f: MID },
        ]} />
      <Sector top="M917 752Q945 766 978 767L988 955Q890 950 807 908Z" text="N" x={920} y={853} rot={104} latin
        sides={[{ d: "M807 908L806 930Q890 975 988 977L988 955Q890 950 807 908Z", f: DARK }]} />
      <Sector top="M703 568L886 505L929 550L819 705Q745 655 703 568Z" text="习" x={830} y={590} rot={-216}
        sides={[
          { d: "M703 568Q745 655 819 705L818 728Q740 680 706 590Z", f: "#46504f" },
          { d: "M819 705L818 728L929 573L929 550Z", f: "#59666a" },
        ]} />

      {/* cylinder top */}
      <ellipse cx="985" cy="469" rx="101" ry="95" fill={TOP} stroke={EDGE} strokeWidth="1" />
    </svg>
  );
}

function Watermark() {
  return (
    <svg className="absolute left-[1630px] top-[980px] pointer-events-none" width="280" height="95" viewBox="1630 980 280 95">
      <path d="M1673 986L1708 1006L1680 1010L1673 1000L1650 1000Z" fill="#b4def4" opacity=".9" />
      <path d="M1673 986L1637 1006V1020L1650 1000H1690Z" fill="#c7e6f4" opacity=".9" />
      <path d="M1690 990L1708 1006V1030L1695 1045L1700 1025Z" fill="#7fcdf3" />
      <path d="M1637 1006V1047L1655 1055L1645 1030Z" fill="#9fd6f0" />
      <path d="M1655 1042L1673 1067L1708 1047V1020L1695 1045L1673 1055Z" fill="#73c3ea" />
      <path d="M1637 1047L1673 1067L1660 1050Z" fill="#9ad6f3" />
      <path d="M1673 1007L1695 1019V1043L1673 1055L1651 1043V1019Z" fill="#e6e7e9" />
      <path d="M1673 1013L1657 1022L1673 1031L1689 1022Z" fill="#c5e5f5" />
      <path d="M1657 1022V1040L1673 1049V1031Z" fill="#a6d8f1" />
      <path d="M1689 1022V1040L1673 1049V1031Z" fill="#78c5e9" />
      <text x="1716" y="1035" fontSize="41" fontWeight="700" fill="#fff" fillOpacity=".55" fontFamily="Liberation Sans, Noto Sans CJK SC, sans-serif">3D世界网</text>
      <text x="1718" y="1053" fontSize="13" fontWeight="700" letterSpacing="2.1" fill="#fff" fillOpacity=".55" fontFamily="Liberation Sans, sans-serif">WWW.3DSJW.COM</text>
    </svg>
  );
}

function Status() {
  return (
    <div className={`h-[22px] pb-[3px] bg-[#f0f0f0] border-t-2 border-[#b5b5b5] flex items-center shrink-0 ${cjk} text-[11px] text-[#111] font-medium`}>
      <span className="ml-[3px] w-[903px] leading-none">选择对象并使用 MB3，或者双击某一对象</span>
      <span className="leading-none">该操作重置恢复数据</span>
      <div className="flex-1" />
      <div className="w-[16px] h-[16px] bg-[#c8c8c8] border border-[#b0b0b0] flex items-center justify-center">
        <svg width="12" height="12" viewBox="0 0 12 12"><path d="M2 1L11 3L9 10L0 8Z" fill="#f4f4f4" stroke="#888" strokeDasharray="2 1" /></svg>
      </div>
      <svg width="16" height="16" viewBox="0 0 18 18" className="ml-[5px] mr-[54px]"><path d="M1 4V1H4M14 1H17V4M17 14V17H14M4 17H1V14" stroke="#888" fill="none" /><rect x="3.5" y="3.5" width="11" height="11" fill="#fff" stroke="#333" strokeWidth="1.4" /><rect x="5" y="6" width="8" height="6" fill="#2f6fd0" /></svg>
    </div>
  );
}

export default function App() {
  return (
    <div className={`w-[1920px] h-[1080px] flex flex-col overflow-hidden relative bg-[#f0f0f0] ${cjk}`}>
      <TitleBar />
      <Tabs />
      <Toolbar />
      <div className="flex-1 flex min-h-0">
        <LeftBar />
        <Nav />
        <div className="flex-1 flex flex-col min-w-0 border-l border-[#c8c8c8]">
          <div className="h-[21px] bg-[#f0f0f0] shrink-0" />
          <div className="h-[2px] bg-[#4f9fb8] shrink-0" />
          <div className="flex-1 relative bg-gradient-to-b from-[#b7b8ba] to-[#e7e8ea] to-[85%]">
            <Model />
          </div>
        </div>
      </div>
      <Status />
      <div className="h-[2px] bg-[#2a2a2a] shrink-0" />
      <Watermark />
    </div>
  );
}
